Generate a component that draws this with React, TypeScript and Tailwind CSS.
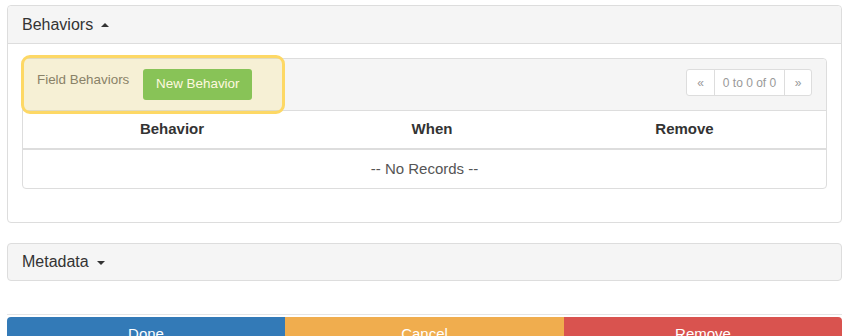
export default function App() {
  return (
    <div className="min-h-[336px] bg-white pl-[7px] pr-[10px] pt-[5px] font-['Liberation_Sans',Arial,sans-serif] text-[15px] text-[#333]">
      {/* Behaviors panel */}
      <div className="mb-[20px] rounded-[4px] border border-[#ddd] bg-white">
        <div className="flex h-[38px] items-center gap-[8px] rounded-t-[4px] border-b border-[#ddd] bg-[#f5f5f5] px-[14px] text-[16px] text-[#333]">
          <span>Behaviors</span>
          <span className="mt-[1px] h-0 w-0 border-x-[4px] border-b-[4px] border-x-transparent border-b-[#333]" />
        </div>
        <div className="p-[14px] pb-[13px]">
          <div className="mb-[20px] rounded-[4px] border border-[#ddd]">
            <div className="relative flex h-[51px] items-start justify-between rounded-t-[4px] bg-[#f5f5f5] pl-[14px] pr-[14px] pt-[10px]">
              <div className="flex items-start gap-[14px]">
                <span className="mt-[1px] text-[13.4px] text-[#777]">Field Behaviors</span>
                <span className="flex h-[31px] w-[109px] items-center justify-center rounded-[3px] bg-[#76c264] text-[13.4px] text-white">
                  New Behavior
                </span>
              </div>
              <div className="flex h-[27px] rounded-[3px] border border-[#ddd] bg-white text-[12px] text-[#999]">
                <span className="flex w-[27px] items-center justify-center">«</span>
                <span className="flex w-[71px] items-center justify-center border-x border-[#ddd]">0 to 0 of 0</span>
                <span className="flex w-[26px] items-center justify-center">»</span>
              </div>
              {/* highlight overlay */}
              <div className="pointer-events-none absolute left-[-2px] top-[-4px] h-[59px] w-[264px] rounded-[9px] border-[3px] border-[#fdd865] bg-[#ffcc00]/[0.13]" />
            </div>
            <div className="grid grid-cols-[298px_222px_1fr] border-y border-b-2 border-[#ddd] font-bold">
              <div className="flex h-[37px] items-center justify-center">Behavior</div>
              <div className="flex h-[37px] items-center justify-center">When</div>
              <div className="flex h-[37px] items-center justify-center">Remove</div>
            </div>
            <div className="flex h-[38px] items-center justify-center text-[#555]">-- No Records --</div>
          </div>
        </div>
      </div>

      {/* Metadata panel */}
      <div className="mb-[33px] rounded-[4px] border border-[#ddd] bg-[#f5f5f5]">
        <div className="flex h-[36px] items-center gap-[8px] px-[14px] text-[16px] text-[#333]">
          <span>Metadata</span>
          <span className="mt-[1px] h-0 w-0 border-x-[4px] border-t-[4px] border-x-transparent border-t-[#333]" />
        </div>
      </div>

      {/* Footer buttons */}
      <div className="border-t border-[#e5e5e5] pt-[2px]">
        <div className="grid grid-cols-[278px_279px_1fr] text-[15px] text-white">
          <div className="flex h-[34px] items-start justify-center rounded-tl-[4px] bg-[#337ab7] pt-[6px]">Done</div>
          <div className="flex h-[34px] items-start justify-center bg-[#f0ad4e] pt-[6px]">Cancel</div>
          <div className="flex h-[34px] items-start justify-center rounded-tr-[4px] bg-[#d9534f] pt-[6px]">Remove</div>
        </div>
      </div>
    </div>
  );
}
